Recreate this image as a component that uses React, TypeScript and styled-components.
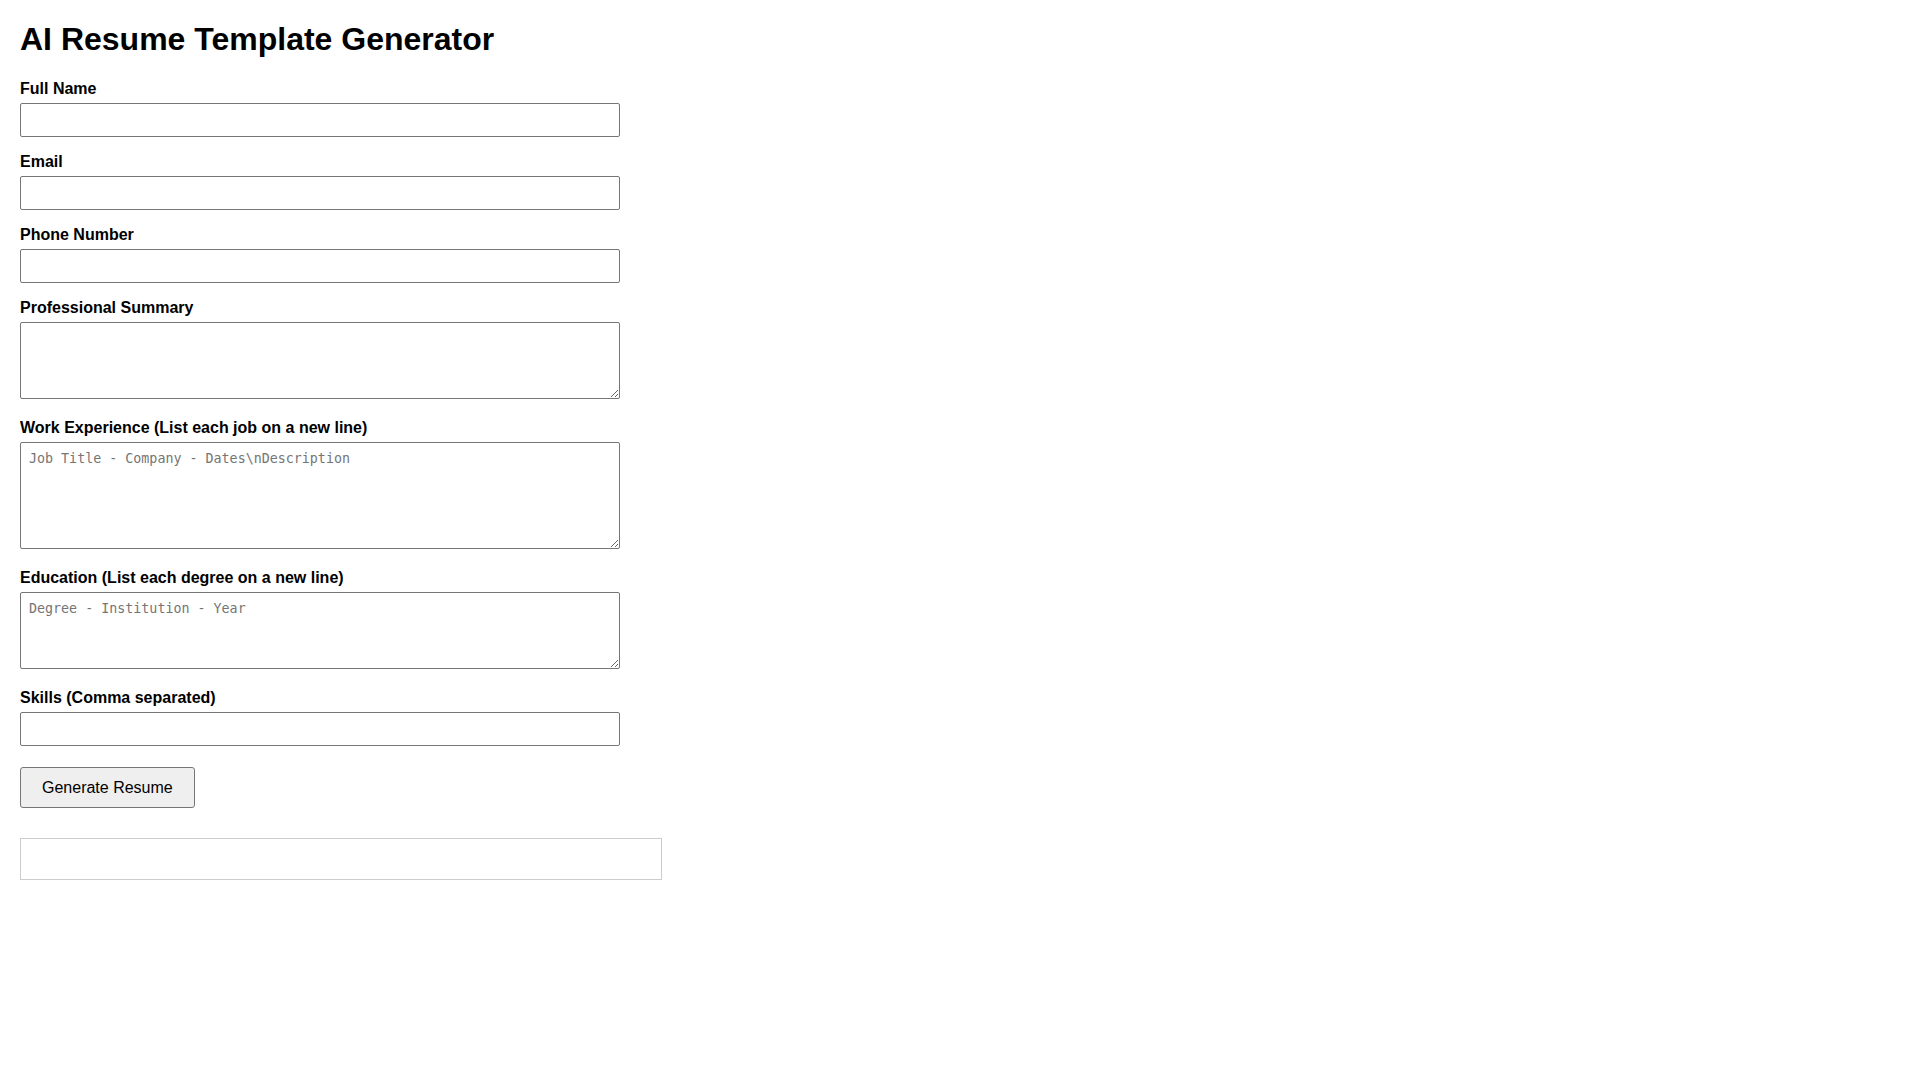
import React, { useState } from 'react';
import styled, { createGlobalStyle } from 'styled-components';

const GlobalStyle = createGlobalStyle`
	body {
		margin: 0 20px 20px;
		background: #fff;
		color: #000;
		font-family: 'Liberation Sans', Arial, sans-serif;
	}
`;

const Title = styled.h1`
	font-size: 32px;
	font-weight: bold;
	margin: 21.44px 0;
`;

const Form = styled.form`
	max-width: 600px;
`;

const FormGroup = styled.div`
	margin-bottom: 16px;
`;

const Label = styled.label`
	display: block;
	margin-bottom: 5px;
	font-size: 16px;
	font-weight: bold;
`;

const TextInput = styled.input`
	box-sizing: border-box;
	width: 100%;
	height: 34px;
	padding: 8px;
	border: 1px solid #767676;
	border-radius: 2px;
	font-family: 'Liberation Sans', Arial, sans-serif;
	font-size: 13.33px;
	background: #fff;
`;

const TextArea = styled.textarea<{ $height: number }>`
	box-sizing: border-box;
	width: 100%;
	height: ${p => p.$height}px;
	padding: 8px;
	border: 1px solid #767676;
	border-radius: 2px;
	font-family: 'DejaVu Sans Mono', monospace;
	font-size: 13.33px;
	background: #fff;
	vertical-align: baseline;

	&::placeholder {
		color: #757575;
	}
`;

const SubmitButton = styled.button`
	margin-top: 5px;
	padding: 10px 21px;
	line-height: 19px;
	font-family: 'Liberation Sans', Arial, sans-serif;
	font-size: 16px;
	color: #000;
	background: #efefef;
	border: 1px solid #767676;
	border-radius: 3px;
	cursor: pointer;
`;

const ResultBox = styled.div`
	max-width: 600px;
	margin-top: 30px;
	padding: 20px;
	border: 1px solid #ccc;
	white-space: pre-wrap;
`;

const fields = [
	{ id: 'name', label: 'Full Name', kind: 'input' },
	{ id: 'email', label: 'Email', kind: 'input' },
	{ id: 'phone', label: 'Phone Number', kind: 'input' },
	{ id: 'summary', label: 'Professional Summary', kind: 'textarea', height: 77 },
	{
		id: 'experience',
		label: 'Work Experience (List each job on a new line)',
		kind: 'textarea',
		height: 107,
		placeholder: 'Job Title - Company - Dates\\nDescription',
	},
	{
		id: 'education',
		label: 'Education (List each degree on a new line)',
		kind: 'textarea',
		height: 77,
		placeholder: 'Degree - Institution - Year',
	},
	{ id: 'skills', label: 'Skills (Comma separated)', kind: 'input' },
];

export default function App() {
	const [values, setValues] = useState<Record<string, string>>({});
	const [result, setResult] = useState('');

	const update = (id: string, v: string) => setValues(prev => ({ ...prev, [id]: v }));

	const generate = (e: React.FormEvent) => {
		e.preventDefault();
		setResult('');
	};

	return (
		<>
			<GlobalStyle />
			<Title>AI Resume Template Generator</Title>
			<Form onSubmit={generate}>
				{fields.map(f => (
					<FormGroup key={f.id}>
						<Label htmlFor={f.id}>{f.label}</Label>
						{f.kind === 'input' ? (
							<TextInput
								id={f.id}
								type="text"
								value={values[f.id] || ''}
								onChange={e => update(f.id, e.target.value)}
							/>
						) : (
							<TextArea
								id={f.id}
								$height={f.height}
								placeholder={f.placeholder}
								value={values[f.id] || ''}
								onChange={e => update(f.id, e.target.value)}
							/>
						)}
					</FormGroup>
				))}
				<SubmitButton type="submit">Generate Resume</SubmitButton>
			</Form>
			<ResultBox>{result}</ResultBox>
		</>
	);
}
